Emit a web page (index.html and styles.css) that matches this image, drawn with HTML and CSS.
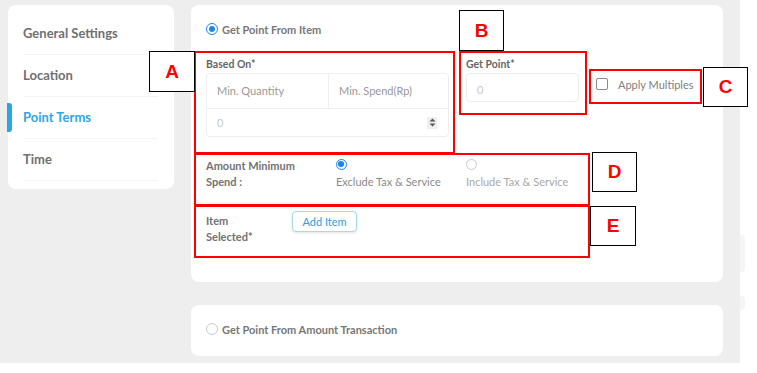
FILE: index.html
```html
<!DOCTYPE html>
<html>
<head>
<meta charset="utf-8">
<link rel="stylesheet" href="styles.css">
</head>
<body>
<div class="page">
  <aside class="card sidebar">
    <div class="nav-item">General Settings</div>
    <div class="nav-item">Location</div>
    <div class="nav-item active"><span class="indicator"></span>Point Terms</div>
    <div class="nav-item">Time</div>
  </aside>
  <main class="content">
    <section class="card card-item">
      <div class="radio-row">
        <span class="radio checked"></span>
        <span class="radio-label">Get Point From Item</span>
      </div>
      <div class="fields">
        <div class="group based">
          <div class="label">Based On*</div>
          <div class="table">
            <div class="thead">
              <div class="th first">Min. Quantity</div>
              <div class="th">Min. Spend(Rp)</div>
            </div>
            <div class="trow">
              <span class="placeholder">0</span>
              <span class="spinner">
                <svg width="9" height="11" viewBox="0 0 9 11"><path d="M4.5 1.5 L7.5 4.5 H1.5 Z" fill="#555"/><path d="M4.5 9.5 L7.5 6.5 H1.5 Z" fill="#555"/></svg>
              </span>
            </div>
          </div>
        </div>
        <div class="group getpoint">
          <div class="label">Get Point*</div>
          <div class="input"><span class="placeholder">0</span></div>
        </div>
        <div class="group multiples">
          <span class="checkbox"></span>
          <span class="check-label">Apply Multiples</span>
        </div>
      </div>
      <div class="amount-row">
        <div class="row-label">Amount Minimum<br>Spend :</div>
        <div class="option">
          <span class="radio small checked"></span>
          <span class="opt-text">Exclude Tax &amp; Service</span>
        </div>
        <div class="option">
          <span class="radio small"></span>
          <span class="opt-text light">Include Tax &amp; Service</span>
        </div>
      </div>
      <div class="item-row">
        <div class="row-label">Item<br>Selected*</div>
        <button class="btn">Add Item</button>
      </div>
    </section>
    <section class="card card-amount">
      <div class="radio-row">
        <span class="radio"></span>
        <span class="radio-label">Get Point From Amount Transaction</span>
      </div>
    </section>
  </main>
  <span class="bump bump1"></span>
  <span class="bump bump2"></span>
</div>

<div class="annot red box-a"></div>
<div class="annot red box-b"></div>
<div class="annot red box-c"></div>
<div class="annot red box-d"></div>
<div class="annot red box-e"></div>
<div class="annot tag tag-a">A</div>
<div class="annot tag tag-b">B</div>
<div class="annot tag tag-c">C</div>
<div class="annot tag tag-d">D</div>
<div class="annot tag tag-e">E</div>
</body>
</html>
```

FILE: styles.css
```css
* { box-sizing: border-box; }
html, body { margin: 0; padding: 0; background: #fff; }
body {
  font-family: Lato, "Open Sans", "Liberation Sans", sans-serif;
  width: 757px;
  height: 373px;
  position: relative;
  overflow: hidden;
}
.page {
  position: relative;
  width: 740px;
  height: 363px;
  background: #eeeeee;
  display: flex;
  align-items: flex-start;
  gap: 17px;
  padding: 5px 0 0 8px;
}
.card {
  background: #fff;
  border-radius: 8px;
}
.sidebar {
  width: 166px;
  height: 184px;
  padding: 8px 16px 0 15px;
}
.nav-item {
  position: relative;
  height: 42px;
  line-height: 41px;
  border-bottom: 1px solid #f3f3f3;
  font-size: 13px;
  font-weight: 700;
  color: #707070;
}
.nav-item.active { color: #2fa6df; }
.indicator {
  position: absolute;
  left: -16px;
  top: 6px;
  width: 5px;
  height: 29px;
  background: #2aa7e1;
  border-radius: 0 3px 3px 0;
}
.content {
  width: 532px;
  display: flex;
  flex-direction: column;
  gap: 23px;
}
.card-item {
  height: 277px;
  padding: 17px 15px 0 15px;
}
.radio-row {
  display: flex;
  align-items: center;
  gap: 4px;
  height: 14px;
}
.radio {
  width: 12px;
  height: 12px;
  border-radius: 50%;
  border: 1px solid #c9c9d3;
  background: #fff;
  flex: none;
  position: relative;
}
.radio.checked {
  border: 1.5px solid #1c87ea;
}
.radio.checked::after {
  content: "";
  position: absolute;
  left: 1.5px;
  top: 1.5px;
  width: 6px;
  height: 6px;
  border-radius: 50%;
  background: #1c87ea;
}
.radio.small { width: 11px; height: 11px; }
.radio.small.checked::after { left: 1.25px; top: 1.25px; width: 5.5px; height: 5.5px; }
.radio-label {
  font-size: 11px;
  font-weight: 700;
  color: #777;
}
.fields {
  display: flex;
  align-items: flex-start;
  gap: 17px;
  margin-top: 21px;
}
.label {
  font-size: 10.5px;
  font-weight: 700;
  color: #666;
  height: 14px;
  line-height: 14px;
  margin-bottom: 2px;
}
.based { width: 243px; }
.table {
  height: 64px;
  border: 1px solid #eeeeee;
  border-radius: 4px;
}
.thead {
  display: flex;
  height: 35px;
  border-bottom: 1px solid #eeeeee;
}
.th {
  flex: 1;
  padding-left: 10px;
  line-height: 34px;
  font-size: 11px;
  color: #999;
}
.th.first {
  flex: none;
  width: 122px;
  border-right: 1px solid #eeeeee;
}
.trow {
  height: 27px;
  display: flex;
  align-items: center;
  justify-content: space-between;
  padding: 0 11px 0 10px;
}
.placeholder {
  font-size: 11px;
  color: #c8c8c8;
}
.spinner {
  width: 10px;
  height: 12px;
  background: #efefef;
  display: flex;
  align-items: center;
  justify-content: center;
}
.getpoint { width: 113px; }
.input {
  height: 29px;
  border: 1px solid #ececec;
  border-radius: 4px;
  padding-left: 10px;
  line-height: 27px;
}
.multiples {
  display: flex;
  align-items: center;
  gap: 10px;
  margin-top: 21px;
  height: 12px;
}
.checkbox {
  width: 12px;
  height: 12px;
  border: 1.5px solid #8a8a8a;
  border-radius: 2px;
}
.check-label {
  font-size: 11px;
  color: #808080;
}
.amount-row {
  display: flex;
  margin-top: 21px;
}
.row-label {
  width: 130px;
  font-size: 11px;
  font-weight: 700;
  line-height: 16px;
  color: #727272;
}
.option {
  width: 130px;
  display: flex;
  flex-direction: column;
  align-items: flex-start;
  padding-top: 1px;
}
.opt-text {
  margin-top: 5px;
  font-size: 11px;
  color: #8a8a8a;
}
.opt-text.light { color: #a8a8a8; }
.item-row {
  display: flex;
  align-items: flex-start;
  margin-top: 23px;
}
.item-row .row-label { width: 86px; }
.btn {
  margin-top: -2px;
  width: 65px;
  height: 21px;
  padding: 0;
  background: #fff;
  border: 1px solid #a9d8f0;
  border-radius: 4px;
  box-shadow: 0 1px 3px rgba(0,0,0,0.12);
  font-family: inherit;
  font-size: 11px;
  color: #2a9fdc;
}
.card-amount {
  height: 51px;
  padding: 17px 15px 0 15px;
}
.bump {
  position: absolute;
  left: 740px;
  width: 5px;
  background: #f5f5f5;
  border-radius: 0 4px 4px 0;
}
.bump1 { top: 235px; height: 37px; }
.bump2 { top: 296px; height: 14px; }

.annot { position: absolute; }
.red { border: 2px solid #ff0000; }
.box-a { left: 194px; top: 51px; width: 261px; height: 103px; }
.box-b { left: 459px; top: 51px; width: 128px; height: 64px; }
.box-c { left: 589px; top: 69px; width: 113px; height: 35px; }
.box-d { left: 194px; top: 153px; width: 396px; height: 53px; }
.box-e { left: 194px; top: 205px; width: 396px; height: 53px; }
.tag {
  border: 1px solid #000;
  background: #fff;
  color: #ff0000;
  font-family: "Liberation Sans", Arial, sans-serif;
  font-weight: 700;
  font-size: 19px;
  display: flex;
  align-items: center;
  justify-content: center;
}
.tag-a { left: 149px; top: 51px; width: 46px; height: 41px; }
.tag-b { left: 459px; top: 10px; width: 45px; height: 41px; }
.tag-c { left: 703px; top: 67px; width: 45px; height: 40px; }
.tag-d { left: 592px; top: 152px; width: 45px; height: 40px; }
.tag-e { left: 590px; top: 206px; width: 46px; height: 40px; }
```
